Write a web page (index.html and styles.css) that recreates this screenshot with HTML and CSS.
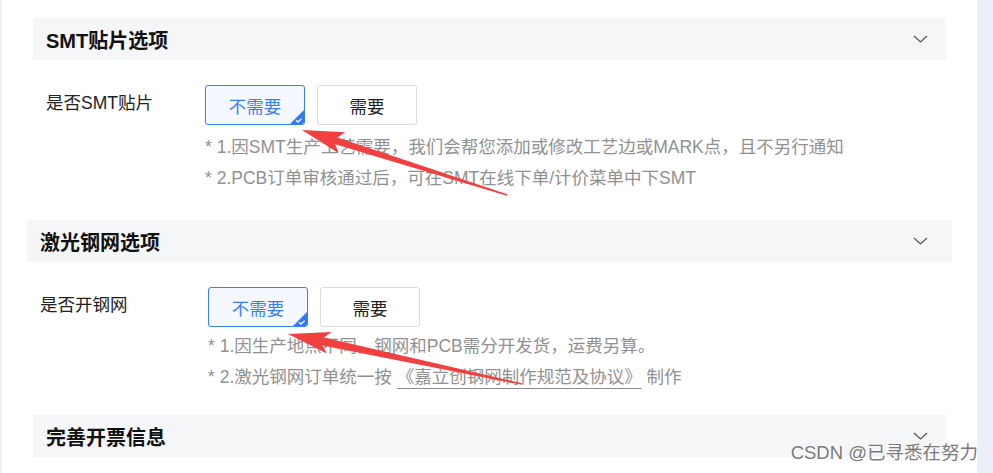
FILE: index.html
```html
<html>
<head>
	<meta charset="UTF-8">
	<link rel="stylesheet" href="styles.css">
</head>

<body>
	<div class="page">
		<div class="edge"></div>

		<main class="content">
			<section class="group group-smt">
				<div class="group-head">
					<h2>SMT贴片选项</h2>
					<svg class="chevron" viewBox="0 0 15 8"><polyline points="1,1 7.5,7 14,1"/></svg>
				</div>
				<div class="field">
					<div class="field-label">是否SMT贴片</div>
					<div class="field-body">
						<div class="choices">
							<button class="choice is-active">不需要
								<svg class="tick" viewBox="0 0 14 14"><polygon points="14,0 14,14 0,14"/><polyline points="6,10.2 8,12 11.6,8.6"/></svg>
							</button>
							<button class="choice">需要</button>
						</div>
						<ul class="notes">
							<li>* 1.因SMT生产工艺需要，我们会帮您添加或修改工艺边或MARK点，且不另行通知</li>
							<li>* 2.PCB订单审核通过后，可在SMT在线下单/计价菜单中下SMT</li>
						</ul>
					</div>
				</div>
			</section>

			<section class="group group-stencil">
				<div class="group-head">
					<h2>激光钢网选项</h2>
					<svg class="chevron" viewBox="0 0 15 8"><polyline points="1,1 7.5,7 14,1"/></svg>
				</div>
				<div class="field">
					<div class="field-label">是否开钢网</div>
					<div class="field-body">
						<div class="choices">
							<button class="choice is-active">不需要
								<svg class="tick" viewBox="0 0 14 14"><polygon points="14,0 14,14 0,14"/><polyline points="6,10.2 8,12 11.6,8.6"/></svg>
							</button>
							<button class="choice">需要</button>
						</div>
						<ul class="notes">
							<li>* 1.因生产地点不同，钢网和PCB需分开发货，运费另算。</li>
							<li>* 2.激光钢网订单统一按 <a class="doc-link">《嘉立创钢网制作规范及协议》</a> 制作</li>
						</ul>
					</div>
				</div>
			</section>

			<section class="group group-invoice">
				<div class="group-head">
					<h2>完善开票信息</h2>
					<svg class="chevron" viewBox="0 0 15 8"><polyline points="1,1 7.5,7 14,1"/></svg>
				</div>
			</section>
		</main>

		<div class="rail"></div>
	</div>

	<!-- red annotation arrows drawn over the form -->
	<svg class="marks" viewBox="0 0 993 473">
		<polygon points="302,130 345.3,132.2 337.4,137.6 507.2,194.2 506.8,195.8 335.2,144.2 338.7,153.2"/>
		<polygon points="288,334 331.4,332 324,337.6 522.2,383.2 521.8,384.8 322.4,345.4 326.8,353.6"/>
	</svg>

	<div class="watermark">CSDN @已寻悉在努力</div>
</body>
</html>
```

FILE: styles.css
```css
body {
	margin: 0;
	padding: 0;
	background-color: #fff;
	font-family: "Liberation Sans", "Noto Sans CJK SC", sans-serif;
	color: #222;
	overflow: hidden;
}

.page {
	display: flex;
	height: 473px;
}

.edge {
	width: 2px;
	background-color: #eceff8;
}

.rail {
	width: 16px;
	background-color: #eceff8;
}

.content {
	flex: 1;
	padding-top: 18px;
}

.group {
	margin: 0 31px;
}

.group-smt {
	margin-bottom: 26px;
}

.group-stencil {
	margin: 0 25px 22px;
}

.group-head {
	height: 42px;
	display: flex;
	align-items: center;
	justify-content: space-between;
	padding: 0 18px 0 13px;
	background-color: #f5f6f8;
}

.group-stencil .group-head {
	padding-right: 24px;
}

.group-head h2 {
	margin: 0;
	font-size: 20px;
	font-weight: bold;
	color: #111;
}

.chevron {
	width: 15px;
	height: 8px;
	fill: none;
	stroke: #555;
	stroke-width: 1.2;
}

.field {
	display: flex;
	margin-top: 25px;
	padding-left: 13px;
}

.field-label {
	width: 159px;
	line-height: 36px;
	font-size: 17.5px;
	color: #222;
}

.group-stencil .field-label {
	width: 168px;
}

.choices {
	display: flex;
	gap: 12px;
}

.choice {
	position: relative;
	width: 100px;
	height: 40px;
	padding: 0;
	border: 1px solid #dcdcdc;
	border-radius: 3px;
	background-color: #fff;
	font-family: inherit;
	font-size: 17.5px;
	color: #222;
	overflow: hidden;
}

.choice.is-active {
	border-color: #3580f4;
	background-color: #f5f9ff;
	color: #3a7ef5;
}

.tick {
	position: absolute;
	right: 0;
	bottom: 0;
	width: 14px;
	height: 14px;
}

.tick polygon {
	fill: #2f7bf5;
}

.tick polyline {
	fill: none;
	stroke: #fff;
	stroke-width: 1.3;
}

.notes {
	list-style: none;
	margin: 7px 0 0;
	padding: 0;
	font-size: 17.5px;
	line-height: 31px;
	color: #919191;
	white-space: nowrap;
}

.group-stencil .notes {
	margin-top: 4px;
}

.doc-link {
	padding-bottom: 1px;
	border-bottom: 1px solid #8c8c8c;
	color: #919191;
}

.marks {
	position: absolute;
	left: 0;
	top: 0;
	width: 993px;
	height: 473px;
	pointer-events: none;
}

.marks polygon {
	fill: #f0403f;
}

.watermark {
	position: absolute;
	right: 15px;
	bottom: 9px;
	font-family: "Liberation Sans", "Noto Sans CJK SC", sans-serif;
	font-size: 18.5px;
	color: #7a7a7a;
	text-shadow: 0 0 2px #fff, 0 0 2px #fff;
}
```
